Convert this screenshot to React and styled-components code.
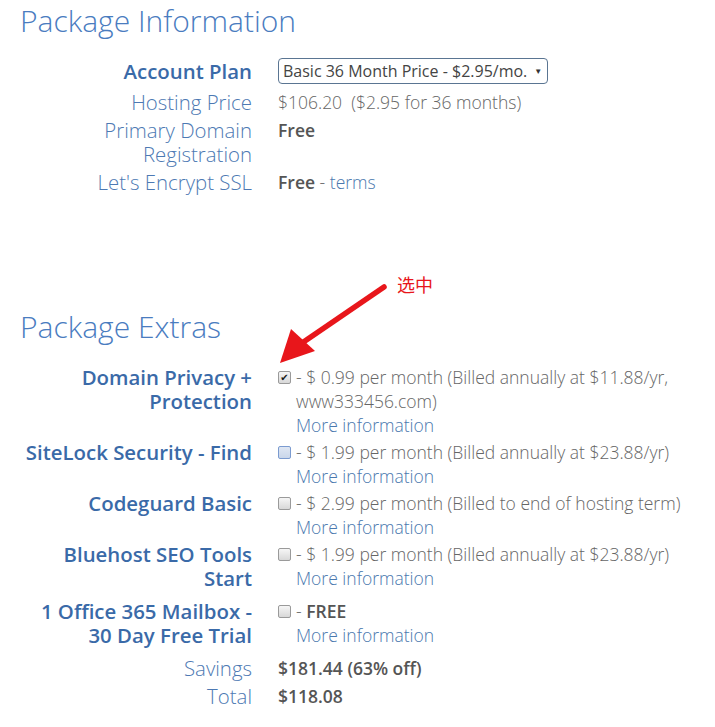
import styled, { createGlobalStyle } from 'styled-components';

const GlobalStyle = createGlobalStyle`
  html, body {
    margin: 0;
    padding: 0;
    background: #fff;
    font-family: "Open Sans", "Noto Sans", sans-serif;
  }
`;

const extras = [
  {
    label: ['Domain Privacy +', 'Protection'],
    text: ['- $ 0.99 per month (Billed annually at $11.88/yr,', 'www333456.com)'],
    checked: true,
  },
  {
    label: ['SiteLock Security - Find'],
    text: ['- $ 1.99 per month (Billed annually at $23.88/yr)'],
    focused: true,
  },
  {
    label: ['Codeguard Basic'],
    text: ['- $ 2.99 per month (Billed to end of hosting term)'],
  },
  {
    label: ['Bluehost SEO Tools', 'Start'],
    text: ['- $ 1.99 per month (Billed annually at $23.88/yr)'],
  },
  {
    label: ['1 Office 365 Mailbox -', '30 Day Free Trial'],
    text: ['- '],
    free: true,
    spaced: true,
  },
];

export default function App() {
  return (
    <Page>
      <GlobalStyle />
      <Titulo>Package Information</Titulo>
      <Tabela>
        <Linha plan>
          <Rotulo strong>Account Plan</Rotulo>
          <Valor>
            <Select>
              <span>Basic 36 Month Price - $2.95/mo.</span>
              <Seta>▼</Seta>
            </Select>
          </Valor>
        </Linha>
        <Linha>
          <Rotulo>Hosting Price</Rotulo>
          <Valor>$106.20&nbsp; ($2.95 for 36 months)</Valor>
        </Linha>
        <Linha>
          <Rotulo>Primary Domain<br />Registration</Rotulo>
          <Valor><b>Free</b></Valor>
        </Linha>
        <Linha>
          <Rotulo>Let's Encrypt SSL</Rotulo>
          <Valor><b>Free</b> - <Link>terms</Link></Valor>
        </Linha>
      </Tabela>

      <Titulo extras>Package Extras</Titulo>
      <Tabela>
        {extras.map((item, index) => (
          <Linha key={index} extra spaced={item.spaced}>
            <Rotulo strong>
              {item.label.map((l, i) => <div key={i}>{l}</div>)}
            </Rotulo>
            <Valor>
              <Opcao>
                <Check checked={item.checked} focused={item.focused}>
                  {item.checked ? '✔' : ''}
                </Check>
                <div>
                  {item.text.map((t, i) => (
                    <div key={i}>{t}{item.free && <b>FREE</b>}</div>
                  ))}
                  <Link>More information</Link>
                </div>
              </Opcao>
            </Valor>
          </Linha>
        ))}
        <Linha total>
          <Rotulo>Savings</Rotulo>
          <Valor><b>$181.44 (63% off)</b></Valor>
        </Linha>
        <Linha>
          <Rotulo>Total</Rotulo>
          <Valor><b>$118.08</b></Valor>
        </Linha>
      </Tabela>

      <Anotacao>
        <svg width="715" height="727" viewBox="0 0 715 727">
          <line x1="384" y1="287" x2="302" y2="343" stroke="#e8161b" strokeWidth="5.5" strokeLinecap="round" />
          <polygon points="280,363 291,329 315,351" fill="#e8161b" />
        </svg>
        <Nota>选中</Nota>
      </Anotacao>
    </Page>
  );
}

const Page = styled.div`
  position: relative;
  width: 715px;
  height: 727px;
  overflow: hidden;
`;

const Titulo = styled.h2`
  margin: ${p => (p.extras ? '108px 0 17px 20px' : '0 0 16px 20px')};
  font-size: 30px;
  font-weight: 300;
  line-height: 42px;
  color: #4a7cbf;
`;

const Tabela = styled.div`
  display: flex;
  flex-direction: column;
`;

const Linha = styled.div`
  display: grid;
  grid-template-columns: 252px 1fr;
  column-gap: 26px;
  align-items: ${p => (p.plan ? 'center' : 'start')};
  margin-bottom: ${p => (p.plan ? '6px' : p.extra ? '3px' : '4px')};
  margin-top: ${p => (p.total ? '6px' : p.spaced ? '6px' : '0')};
`;

const Rotulo = styled.div`
  text-align: right;
  font-size: 20.4px;
  line-height: 24px;
  font-weight: ${p => (p.strong ? 600 : 300)};
  color: ${p => (p.strong ? '#3a6aa8' : '#4d79b3')};
`;

const Valor = styled.div`
  font-size: 17.5px;
  line-height: 24px;
  font-weight: 300;
  color: #666;

  b {
    font-weight: 600;
    color: #555;
  }
`;

const Select = styled.div`
  box-sizing: border-box;
  display: inline-flex;
  align-items: center;
  gap: 7px;
  height: 26px;
  padding: 0 5px 0 4px;
  border: 1px solid #5a7592;
  border-radius: 4px;
  font-size: 16px;
  font-weight: 400;
  color: #444;
`;

const Seta = styled.span`
  font-size: 8px;
  color: #333;
`;

const Link = styled.span`
  color: #4a78ae;
  font-weight: 300;
`;

const Opcao = styled.div`
  display: flex;
  align-items: flex-start;
  gap: 5px;
`;

const Check = styled.span`
  flex: none;
  width: 11px;
  height: 11px;
  margin-top: 6px;
  border: 1px solid ${p => (p.focused ? '#7b9bd0' : '#9a9a9a')};
  border-radius: 2px;
  background: ${p => (p.focused ? 'linear-gradient(#dfe7f3, #c9d6ea)' : 'linear-gradient(#f6f6f6, #d8d8d8)')};
  font-size: 10px;
  font-weight: 700;
  line-height: 11px;
  text-align: center;
  color: #1a1a1a;
  font-family: "DejaVu Sans", sans-serif;
`;

const Anotacao = styled.div`
  position: absolute;
  inset: 0;
  pointer-events: none;
`;

const Nota = styled.span`
  position: absolute;
  left: 397px;
  top: 271px;
  font-size: 18px;
  color: #e8161b;
  font-family: "Noto Sans CJK SC", sans-serif;
`;
